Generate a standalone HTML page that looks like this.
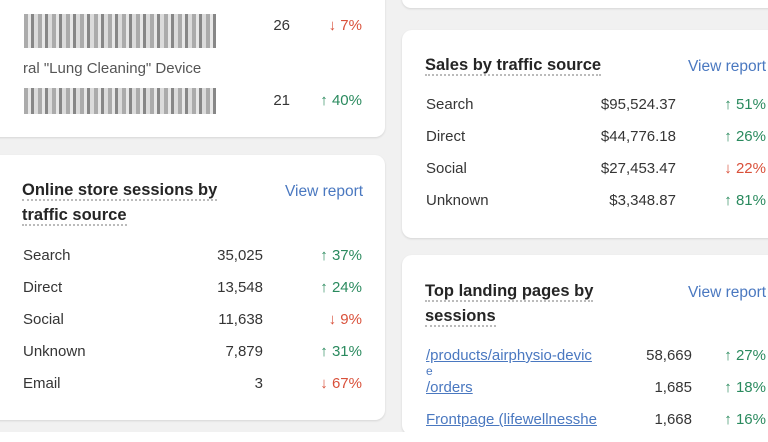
<!DOCTYPE html>
<html><head><style>
body{margin:0;width:768px;height:442px;background:#f1f1f1;font-family:"Liberation Sans",sans-serif;position:relative;overflow:hidden;color:#353535}
.card{position:absolute;background:#fff;border-radius:10px;box-shadow:0 1px 2px rgba(0,0,0,.12)}
.t{position:absolute;font-size:15px;white-space:nowrap}
.h{position:absolute;font-size:16.5px;font-weight:bold;color:#252525;line-height:25px}
.h span{border-bottom:2px dotted #bbb}
.vr{position:absolute;font-size:15.5px;color:#4a78c0}
.r{text-align:right}
.p{text-align:right;width:60px}
.up{color:#2a8a5e}.dn{color:#d9503a}
.blur{position:absolute;height:34px;background:repeating-linear-gradient(90deg,#888 0 4px,#ddd 4px 7px,#555 7px 10px,#ccc 10px 14px),#aaa;opacity:.7}
a{color:#4a78c0;text-decoration:underline}
</style></head><body>
<div class="card" style="left:-10px;top:-10px;width:395px;height:147px"></div>
<div class="blur" style="left:24px;top:14px;width:192px"></div>
<div class="t r" style="left:230px;width:60px;top:17px">26</div>
<div class="t dn p" style="left:302px;top:17px">↓ 7%</div>
<div class="t" style="left:23px;top:60px;color:#555">ral "Lung Cleaning" Device</div>
<div class="blur" style="left:24px;top:88px;width:192px;height:26px"></div>
<div class="t r" style="left:230px;width:60px;top:92px">21</div>
<div class="t up p" style="left:302px;top:92px">↑ 40%</div>

<div class="card" style="left:-10px;top:155px;width:395px;height:265px"></div>
<div class="h" style="left:22px;top:178px"><span>Online store sessions by</span><br><span>traffic source</span></div>
<div class="vr" style="left:285px;top:183px">View report</div>
<div class="t" style="left:23px;top:247px">Search</div><div class="t r" style="left:190px;width:73px;top:247px">35,025</div><div class="t up p" style="left:302px;top:247px">↑ 37%</div>
<div class="t" style="left:23px;top:279px">Direct</div><div class="t r" style="left:190px;width:73px;top:279px">13,548</div><div class="t up p" style="left:302px;top:279px">↑ 24%</div>
<div class="t" style="left:23px;top:311px">Social</div><div class="t r" style="left:190px;width:73px;top:311px">11,638</div><div class="t dn p" style="left:302px;top:311px">↓ 9%</div>
<div class="t" style="left:23px;top:343px">Unknown</div><div class="t r" style="left:190px;width:73px;top:343px">7,879</div><div class="t up p" style="left:302px;top:343px">↑ 31%</div>
<div class="t" style="left:23px;top:375px">Email</div><div class="t r" style="left:190px;width:73px;top:375px">3</div><div class="t dn p" style="left:302px;top:375px">↓ 67%</div>

<div class="card" style="left:402px;top:-10px;width:380px;height:18px"></div>
<div class="card" style="left:402px;top:30px;width:380px;height:208px"></div>
<div class="h" style="left:425px;top:53px"><span>Sales by traffic source</span></div>
<div class="vr" style="left:688px;top:58px">View report</div>
<div class="t" style="left:426px;top:96px">Search</div><div class="t r" style="left:556px;width:120px;top:96px">$95,524.37</div><div class="t up p" style="left:706px;top:96px">↑ 51%</div>
<div class="t" style="left:426px;top:128px">Direct</div><div class="t r" style="left:556px;width:120px;top:128px">$44,776.18</div><div class="t up p" style="left:706px;top:128px">↑ 26%</div>
<div class="t" style="left:426px;top:160px">Social</div><div class="t r" style="left:556px;width:120px;top:160px">$27,453.47</div><div class="t dn p" style="left:706px;top:160px">↓ 22%</div>
<div class="t" style="left:426px;top:192px">Unknown</div><div class="t r" style="left:556px;width:120px;top:192px">$3,348.87</div><div class="t up p" style="left:706px;top:192px">↑ 81%</div>

<div class="card" style="left:402px;top:255px;width:380px;height:180px"></div>
<div class="h" style="left:425px;top:279px"><span>Top landing pages by</span><br><span>sessions</span></div>
<div class="vr" style="left:688px;top:284px">View report</div>
<div class="t" style="left:426px;top:347px"><a>/products/airphysio-devic</a></div>
<div class="t" style="left:426px;top:364px;font-size:12px;color:#4a78c0">e</div>
<div class="t r" style="left:600px;width:92px;top:347px">58,669</div><div class="t up p" style="left:706px;top:347px">↑ 27%</div>
<div class="t" style="left:426px;top:379px"><a>/orders</a></div><div class="t r" style="left:600px;width:92px;top:379px">1,685</div><div class="t up p" style="left:706px;top:379px">↑ 18%</div>
<div class="t" style="left:426px;top:411px"><a>Frontpage (lifewellnesshe</a></div><div class="t r" style="left:600px;width:92px;top:411px">1,668</div><div class="t up p" style="left:706px;top:411px">↑ 16%</div>
<div style="position:absolute;left:0;top:432px;width:768px;height:10px;background:#fff"></div>
</body></html>
